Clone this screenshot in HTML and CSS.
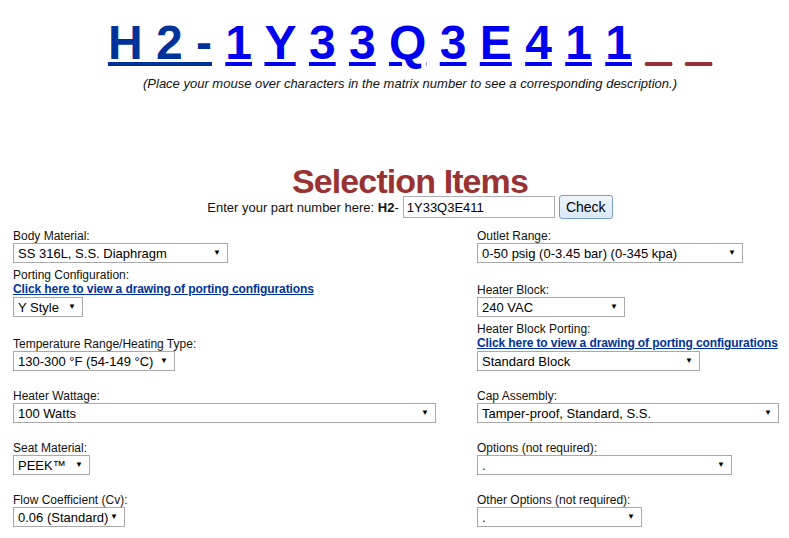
FILE: index.html
```html
<!DOCTYPE html>
<html lang="en">
<head>
    <meta charset="UTF-8">
    <meta name="viewport" content="width=device-width, initial-scale=1.0">
    <title>Matrix Number - Selection Items</title>
    <link rel="stylesheet" href="styles.css">
</head>
<body>
    <div class="top">
        <!-- matrix number, every character is its own link -->
        <div class="matrix">
            <a class="prefix" href="javascript:;">H 2 -</a>
            <a href="javascript:;">1</a>
            <a href="javascript:;">Y</a>
            <a href="javascript:;">3</a>
            <a href="javascript:;">3</a>
            <a href="javascript:;">Q</a>
            <a href="javascript:;">3</a>
            <a href="javascript:;">E</a>
            <a href="javascript:;">4</a>
            <a href="javascript:;">1</a>
            <a href="javascript:;">1</a>
            <a class="blank" href="javascript:;">_</a>
            <a class="blank" href="javascript:;">_</a>
        </div>
        <p class="hint">(Place your mouse over characters in the matrix number to see a corresponding description.)</p>

        <h1 class="title">Selection Items</h1>
        <div class="part-row">
            <span>Enter your part number here: <b>H2</b>-</span>
            <input class="part-input" type="text" value="1Y33Q3E411">
            <button class="check-btn" type="button">Check</button>
        </div>
    </div>

    <div class="fields">
        <div class="row">
            <div class="field">
                <label class="lbl">Body Material:</label>
                <span class="sel"><select class="s-body"><option>SS 316L, S.S. Diaphragm</option></select></span>
            </div>
            <div class="field">
                <label class="lbl">Outlet Range:</label>
                <span class="sel"><select class="s-outlet"><option>0-50 psig (0-3.45 bar) (0-345 kpa)</option></select></span>
            </div>
        </div>

        <div class="row tight">
            <div class="field">
                <label class="lbl">Porting Configuration:</label>
                <a class="lnk" href="javascript:;">Click here to view a drawing of porting configurations</a>
                <span class="sel"><select class="s-port"><option>Y Style</option></select></span>
            </div>
            <div class="field">
                <label class="lbl">Heater Block:</label>
                <span class="sel"><select class="s-heater"><option>240 VAC</option></select></span>
            </div>
        </div>

        <div class="row tight">
            <div class="field">
                <label class="lbl">Temperature Range/Heating Type:</label>
                <span class="sel"><select class="s-temp"><option>130-300 °F (54-149 °C)</option></select></span>
            </div>
            <div class="field">
                <label class="lbl">Heater Block Porting:</label>
                <a class="lnk" href="javascript:;">Click here to view a drawing of porting configurations</a>
                <span class="sel"><select class="s-block"><option>Standard Block</option></select></span>
            </div>
        </div>

        <div class="row">
            <div class="field">
                <label class="lbl">Heater Wattage:</label>
                <span class="sel"><select class="s-watt"><option>100 Watts</option></select></span>
            </div>
            <div class="field">
                <label class="lbl">Cap Assembly:</label>
                <span class="sel"><select class="s-cap"><option>Tamper-proof, Standard, S.S.</option></select></span>
            </div>
        </div>

        <div class="row">
            <div class="field">
                <label class="lbl">Seat Material:</label>
                <span class="sel"><select class="s-seat"><option>PEEK™</option></select></span>
            </div>
            <div class="field">
                <label class="lbl">Options (not required):</label>
                <span class="sel"><select class="s-opt"><option>.</option></select></span>
            </div>
        </div>

        <div class="row">
            <div class="field">
                <label class="lbl">Flow Coefficient (Cv):</label>
                <span class="sel"><select class="s-flow"><option>0.06 (Standard)</option></select></span>
            </div>
            <div class="field">
                <label class="lbl">Other Options (not required):</label>
                <span class="sel"><select class="s-other"><option>.</option></select></span>
            </div>
        </div>
    </div>
</body>
</html>
```

FILE: styles.css
```css
*{
    margin: 0;
    padding: 0;
    box-sizing: border-box;
}
body{
    font-family: "Liberation Sans", Arial, sans-serif;
    color: #111;
    background-color: #fff;
}

/* top block, centred a little right of the window centre */
.top{
    padding: 15px 0 0 31px;
    text-align: center;
}
.matrix{
    font-size: 48px;
    font-weight: bold;
    line-height: 55px;
    white-space: nowrap;
}
.matrix a{
    color: #0000ee;
}
.matrix a.prefix{
    color: #003399;
}
/* empty positions: underscore plus underline gives the thick bar */
.matrix a.blank{
    color: #993333;
}
.hint{
    margin-top: 6px;
    font-size: 13px;
    font-style: italic;
    line-height: 15px;
}
.title{
    margin: 77px 0 1px;
    font-size: 34px;
    letter-spacing: -0.9px;
    line-height: 26px;
    color: #993333;
}
.part-row{
    display: flex;
    justify-content: center;
    align-items: center;
    height: 24px;
    font-size: 13px;
}
.part-input{
    width: 152px;
    height: 22px;
    margin-left: 4px;
    padding: 0 3px;
    border: 1px solid #abadb3;
    font: 13px "Liberation Sans", Arial, sans-serif;
    color: #000;
}
.check-btn{
    width: 54px;
    height: 24px;
    margin-left: 4px;
    border: 1px solid #7a9ec4;
    border-radius: 3px;
    background: linear-gradient(#eef5fc, #d9e9f8);
    font: 14px "Liberation Sans", Arial, sans-serif;
    color: #000;
}

/* selection form */
.fields{
    margin-top: 9px;
    padding-left: 13px;
}
.row{
    display: grid;
    grid-template-columns: 464px 1fr;
    align-items: end;
    margin-top: 17px;
}
.row:first-child{
    margin-top: 0;
}
.row.tight{
    margin-top: 4px;
}
.field{
    display: flex;
    flex-direction: column;
    align-items: flex-start;
}
.lbl{
    font-size: 12px;
    line-height: 15px;
    padding-top: 1px;
    margin-bottom: -1px;
}
.lnk{
    font-size: 12px;
    font-weight: bold;
    letter-spacing: -0.11px;
    line-height: 15px;
    color: #003399;
}
.sel{
    position: relative;
    display: block;
}
.sel::after{
    content: "\25BC";
    position: absolute;
    right: 7px;
    top: 5px;
    font-size: 8px;
    line-height: 10px;
    color: #000;
    pointer-events: none;
}
.sel select{
    display: block;
    height: 20px;
    padding: 0 12px 0 4px;
    border: 1px solid #a9a9a9;
    background-color: #fff;
    font: 13px "Liberation Sans", Arial, sans-serif;
    color: #000;
    appearance: none;
    -webkit-appearance: none;
    border-radius: 0;
}
.s-body{ width: 215px; }
.s-port{ width: 70px; }
.s-temp{ width: 162px; }
.s-watt{ width: 423px; }
.s-seat{ width: 77px; }
.s-flow{ width: 112px; }
.s-outlet{ width: 266px; }
.s-heater{ width: 148px; }
.s-block{ width: 223px; }
.s-cap{ width: 302px; }
.s-opt{ width: 255px; }
.s-other{ width: 165px; }
```
